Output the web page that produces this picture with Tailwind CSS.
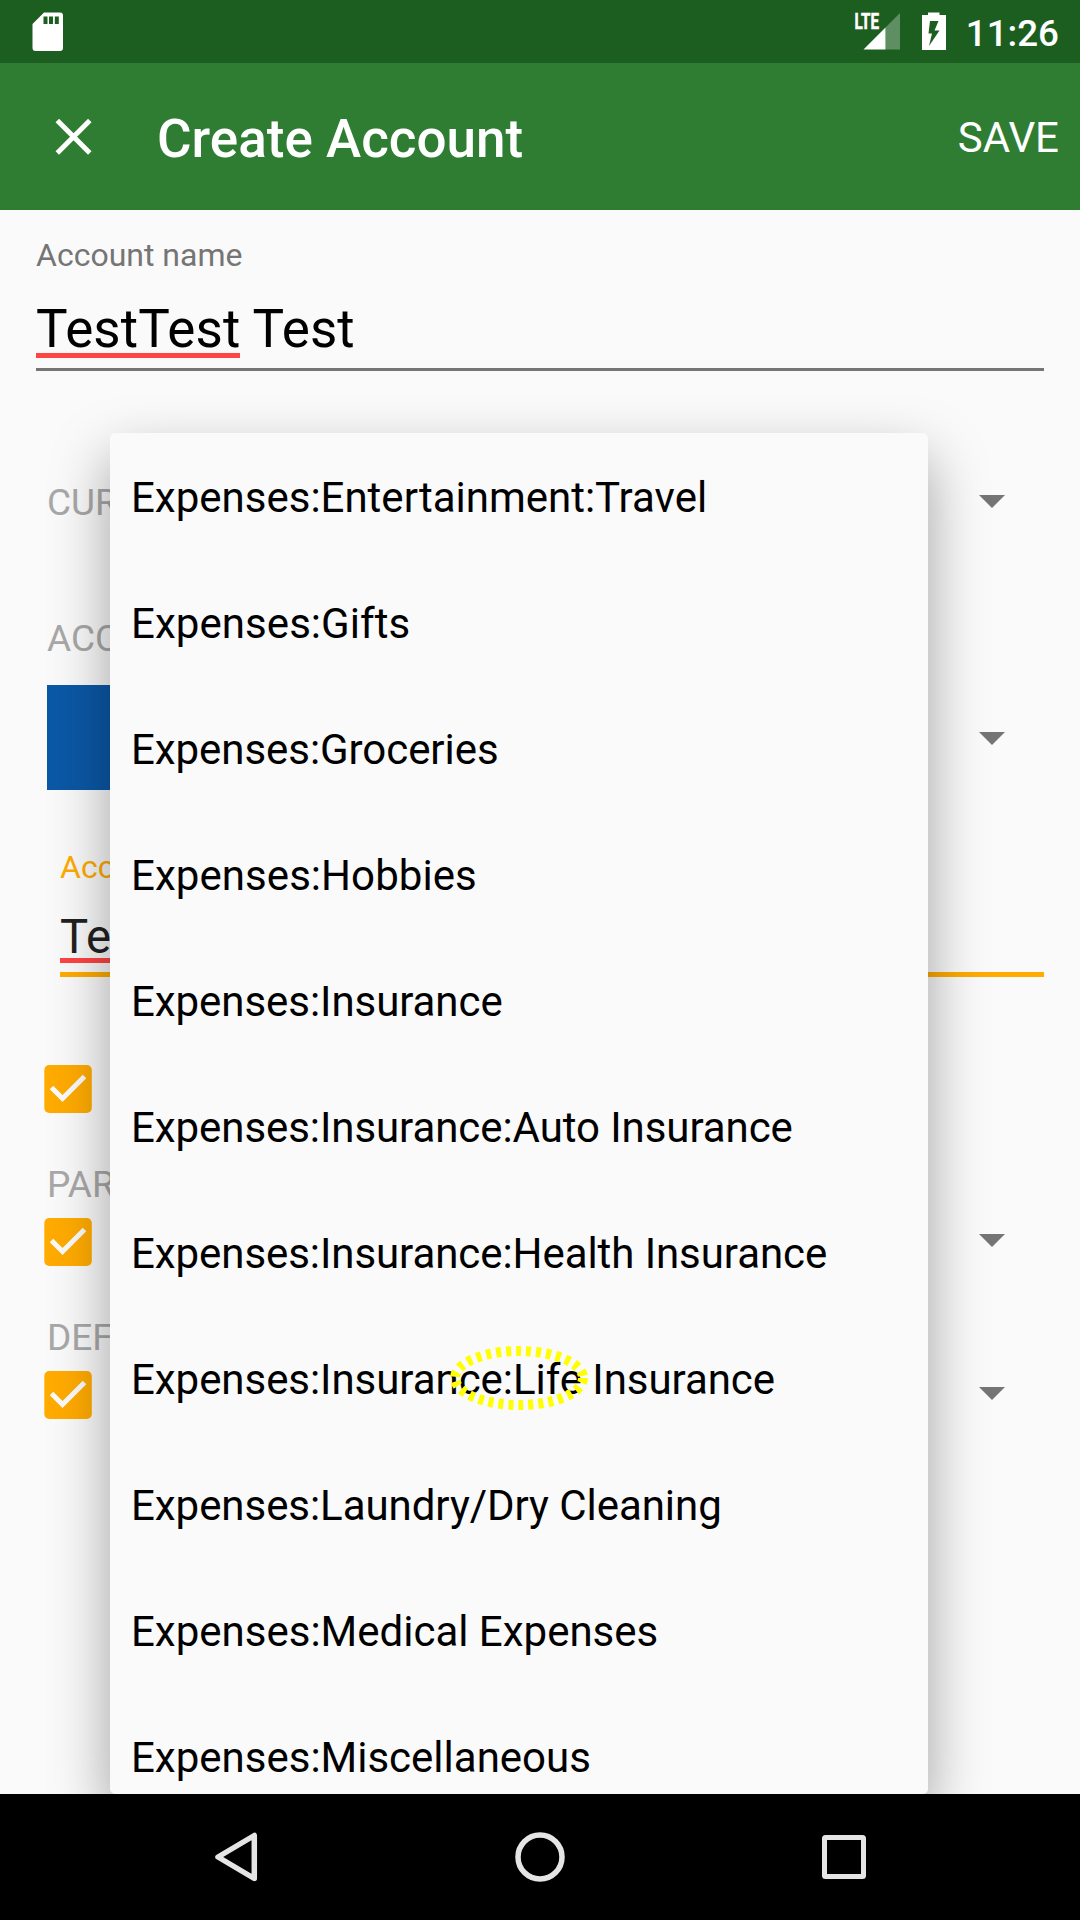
<!DOCTYPE html>
<html lang="en">
<head>
<meta charset="utf-8">
<title>Create Account</title>
<script src="https://cdn.jsdelivr.net/npm/@tailwindcss/browser@4"></script>
</head>
<body class="bg-[#fafafa]">
<div class="relative flex flex-col w-[1080px] h-[1920px] overflow-hidden bg-[#fafafa] font-['Roboto',sans-serif] text-black whitespace-nowrap">

  <!-- Status bar -->
  <header class="flex items-center justify-between h-[63px] shrink-0 bg-[#1b5e20] pl-8 pr-[21px]">
    <svg class="w-8 h-[63px]" viewBox="32 0 32 63"><path fill="#fff" fill-rule="evenodd" d="M44 12.5H60a3 3 0 0 1 3 3V48a3 3 0 0 1-3 3H35.500a3 3 0 0 1-3-3V24zM43.500 16.500v7.500h4v-7.500zM49 16.500v7.500h4v-7.500zM54.800 16.500v7.500h4v-7.500z"/></svg>
    <div class="flex items-center gap-[18px]">
      <svg class="w-[96px] h-[63px]" viewBox="852 0 96 63">
        <text x="854.500" y="29.300" font-size="22.500" font-weight="700" fill="#fff" stroke="#fff" stroke-width=".6" textLength="24.500" lengthAdjust="spacingAndGlyphs">LTE</text>
        <path fill="#fff" fill-opacity=".3" d="M885.500 27.500L900 13V49.500H885.500z"/>
        <path fill="#fff" d="M863.500 49.500L885.500 27.500v22z"/>
        <path fill="#fff" fill-rule="evenodd" d="M928 12.500h11.500V15H946v35h-24V15h6zM930 21l-1.500 12.500h3.500L929 46l10.500-15.500H934.500L938.500 21z"/>
      </svg>
      <span class="text-[36.75px] font-medium leading-[63px] text-white pt-[3px]">11:26</span>
    </div>
  </header>

  <!-- App bar -->
  <div class="flex items-center h-[147px] shrink-0 bg-[#2e7d32] text-white pl-[55px] pr-[21px]">
    <svg class="w-[37px] h-[38px]" viewBox="0 0 37 38"><path stroke="#fff" stroke-width="5" d="M2.300 2.600L34.800 35.100M34.800 2.600L2.300 35.100"/></svg>
    <h1 class="ml-[65px] grow text-[53px] font-medium leading-[60px] pt-[5px]">Create Account</h1>
    <span class="text-[42px] leading-[48px] pt-[3px]">SAVE</span>
  </div>

  <!-- Form -->
  <main class="flex flex-col grow pl-9 pr-9">
    <label class="mt-[27px] h-[37px] text-[32px] leading-[37px] text-[#757575]">Account name</label>
    <div class="mt-[23px] h-[74px] border-b-[3px] border-[#757575]">
      <div class="text-[53px] leading-[64px] tracking-[0.08px]"><span class="inline-block h-[61px] border-b-[5px] border-[#ff4444]">TestTest</span> Test</div>
    </div>
    <div class="mt-[109px] flex h-[44px] items-center justify-between pl-[11px] pr-[39px] text-[37px] text-[#a8a8a8]">
      <span class="pt-[2px] leading-[44px]">CUR</span>
      <svg class="w-[26px] h-[13px] mb-px" viewBox="0 0 26 13"><path fill="#757575" d="M0 0H26L13 13z"/></svg>
    </div>
    <div class="mt-[92px] h-[44px] pl-[11px] text-[37px] leading-[46px] text-[#a8a8a8]">ACC</div>
    <div class="mt-[25px] flex h-[105px] items-center justify-between pl-[11px] pr-[39px]">
      <span class="h-full w-[420px] bg-[#0b58a6]"></span>
      <svg class="w-[26px] h-[13px] mt-[2px]" viewBox="0 0 26 13"><path fill="#757575" d="M0 0H26L13 13z"/></svg>
    </div>
    <div class="ml-6 mt-[59px] flex flex-col">
      <label class="h-[37px] text-[32px] leading-[37px] text-[#ffab00]">Acc</label>
      <div class="mt-[23px] h-[68px] border-b-[5px] border-[#ffab00] text-[47.25px] leading-[56px] text-[#212121]"><span class="inline-block h-[54px] border-b-[5px] border-[#ff4444]">Te</span></div>
    </div>
    <div class="mt-[88px] flex h-12 pl-2">
      <svg class="size-12" viewBox="0 0 48 48"><rect x=".3" width="47.500" height="48" rx="5" fill="#ffab00"/><path fill="none" stroke="#fafafa" stroke-width="5" d="M7.500 22.500L18.500 33.500L40.500 11.500"/></svg>
    </div>
    <div class="mt-[49px] h-[44px] pl-[11px] text-[37px] leading-[46px] text-[#a8a8a8]">PAR</div>
    <div class="mt-3 flex h-12 items-center justify-between pl-2 pr-[39px]">
      <svg class="size-12" viewBox="0 0 48 48"><rect x=".3" width="47.500" height="48" rx="5" fill="#ffab00"/><path fill="none" stroke="#fafafa" stroke-width="5" d="M7.500 22.500L18.500 33.500L40.500 11.500"/></svg>
      <svg class="w-[26px] h-[13px] mb-[3px]" viewBox="0 0 26 13"><path fill="#757575" d="M0 0H26L13 13z"/></svg>
    </div>
    <div class="mt-[49px] h-[44px] pl-[11px] text-[37px] leading-[46px] text-[#a8a8a8]">DEF</div>
    <div class="mt-3 flex h-12 items-center justify-between pl-2 pr-[39px]">
      <svg class="size-12" viewBox="0 0 48 48"><rect x=".3" width="47.500" height="48" rx="5" fill="#ffab00"/><path fill="none" stroke="#fafafa" stroke-width="5" d="M7.500 22.500L18.500 33.500L40.500 11.500"/></svg>
      <svg class="w-[26px] h-[13px] mb-[3px]" viewBox="0 0 26 13"><path fill="#757575" d="M0 0H26L13 13z"/></svg>
    </div>
  </main>

  <!-- Account dropdown -->
  <ul class="absolute left-[110px] top-[433px] h-[1361px] w-[818px] overflow-hidden rounded-[5px] bg-[#fafafa] pl-[21px] pt-[2px] text-[42px] leading-[126px] shadow-[0_25px_58px_rgba(0,0,0,0.36)]">
    <li class="h-[126px]">Expenses:Entertainment:Travel</li>
    <li class="h-[126px] tracking-[0.06px]">Expenses:Gifts</li>
    <li class="h-[126px] tracking-[-0.06px]">Expenses:Groceries</li>
    <li class="h-[126px] tracking-[0.06px]">Expenses:Hobbies</li>
    <li class="h-[126px] tracking-[-0.06px]">Expenses:Insurance</li>
    <li class="h-[126px] tracking-[-0.07px]">Expenses:Insurance:Auto Insurance</li>
    <li class="h-[126px] tracking-[-0.07px]">Expenses:Insurance:Health Insurance</li>
    <li class="h-[126px] tracking-[-0.05px]">Expenses:Insurance:Life Insurance</li>
    <li class="h-[126px] tracking-[-0.05px]">Expenses:Laundry/Dry Cleaning</li>
    <li class="h-[126px]">Expenses:Medical Expenses</li>
    <li class="h-[101px] overflow-hidden">Expenses:Miscellaneous</li>
  </ul>

  <!-- Tap marker -->
  <svg class="absolute left-[449px] top-[1345px] h-[66px] w-[140px]" viewBox="0 0 140 66"><ellipse cx="70" cy="33" rx="64" ry="27" fill="none" stroke="#ff0" stroke-width="10" stroke-dasharray="5 5"/></svg>

  <!-- Navigation bar -->
  <nav class="relative flex h-[126px] shrink-0 items-center justify-center bg-black">
    <div class="flex w-[304px] justify-center"><svg class="size-[52px]" viewBox="0 0 52 52"><path fill="none" stroke="#e5e5e5" stroke-width="5.500" stroke-linejoin="round" d="M44.300 4.500V47.500L8 26z"/></svg></div>
    <div class="flex w-[304px] justify-center"><svg class="size-[52px]" viewBox="0 0 52 52"><circle cx="26" cy="26" r="22" fill="none" stroke="#e5e5e5" stroke-width="5.500"/></svg></div>
    <div class="flex w-[304px] justify-center"><svg class="size-[52px]" viewBox="0 0 52 52"><rect x="6.500" y="6.500" width="39" height="39" rx="1" fill="none" stroke="#e5e5e5" stroke-width="5"/></svg></div>
  </nav>
</div>
</body>
</html>
